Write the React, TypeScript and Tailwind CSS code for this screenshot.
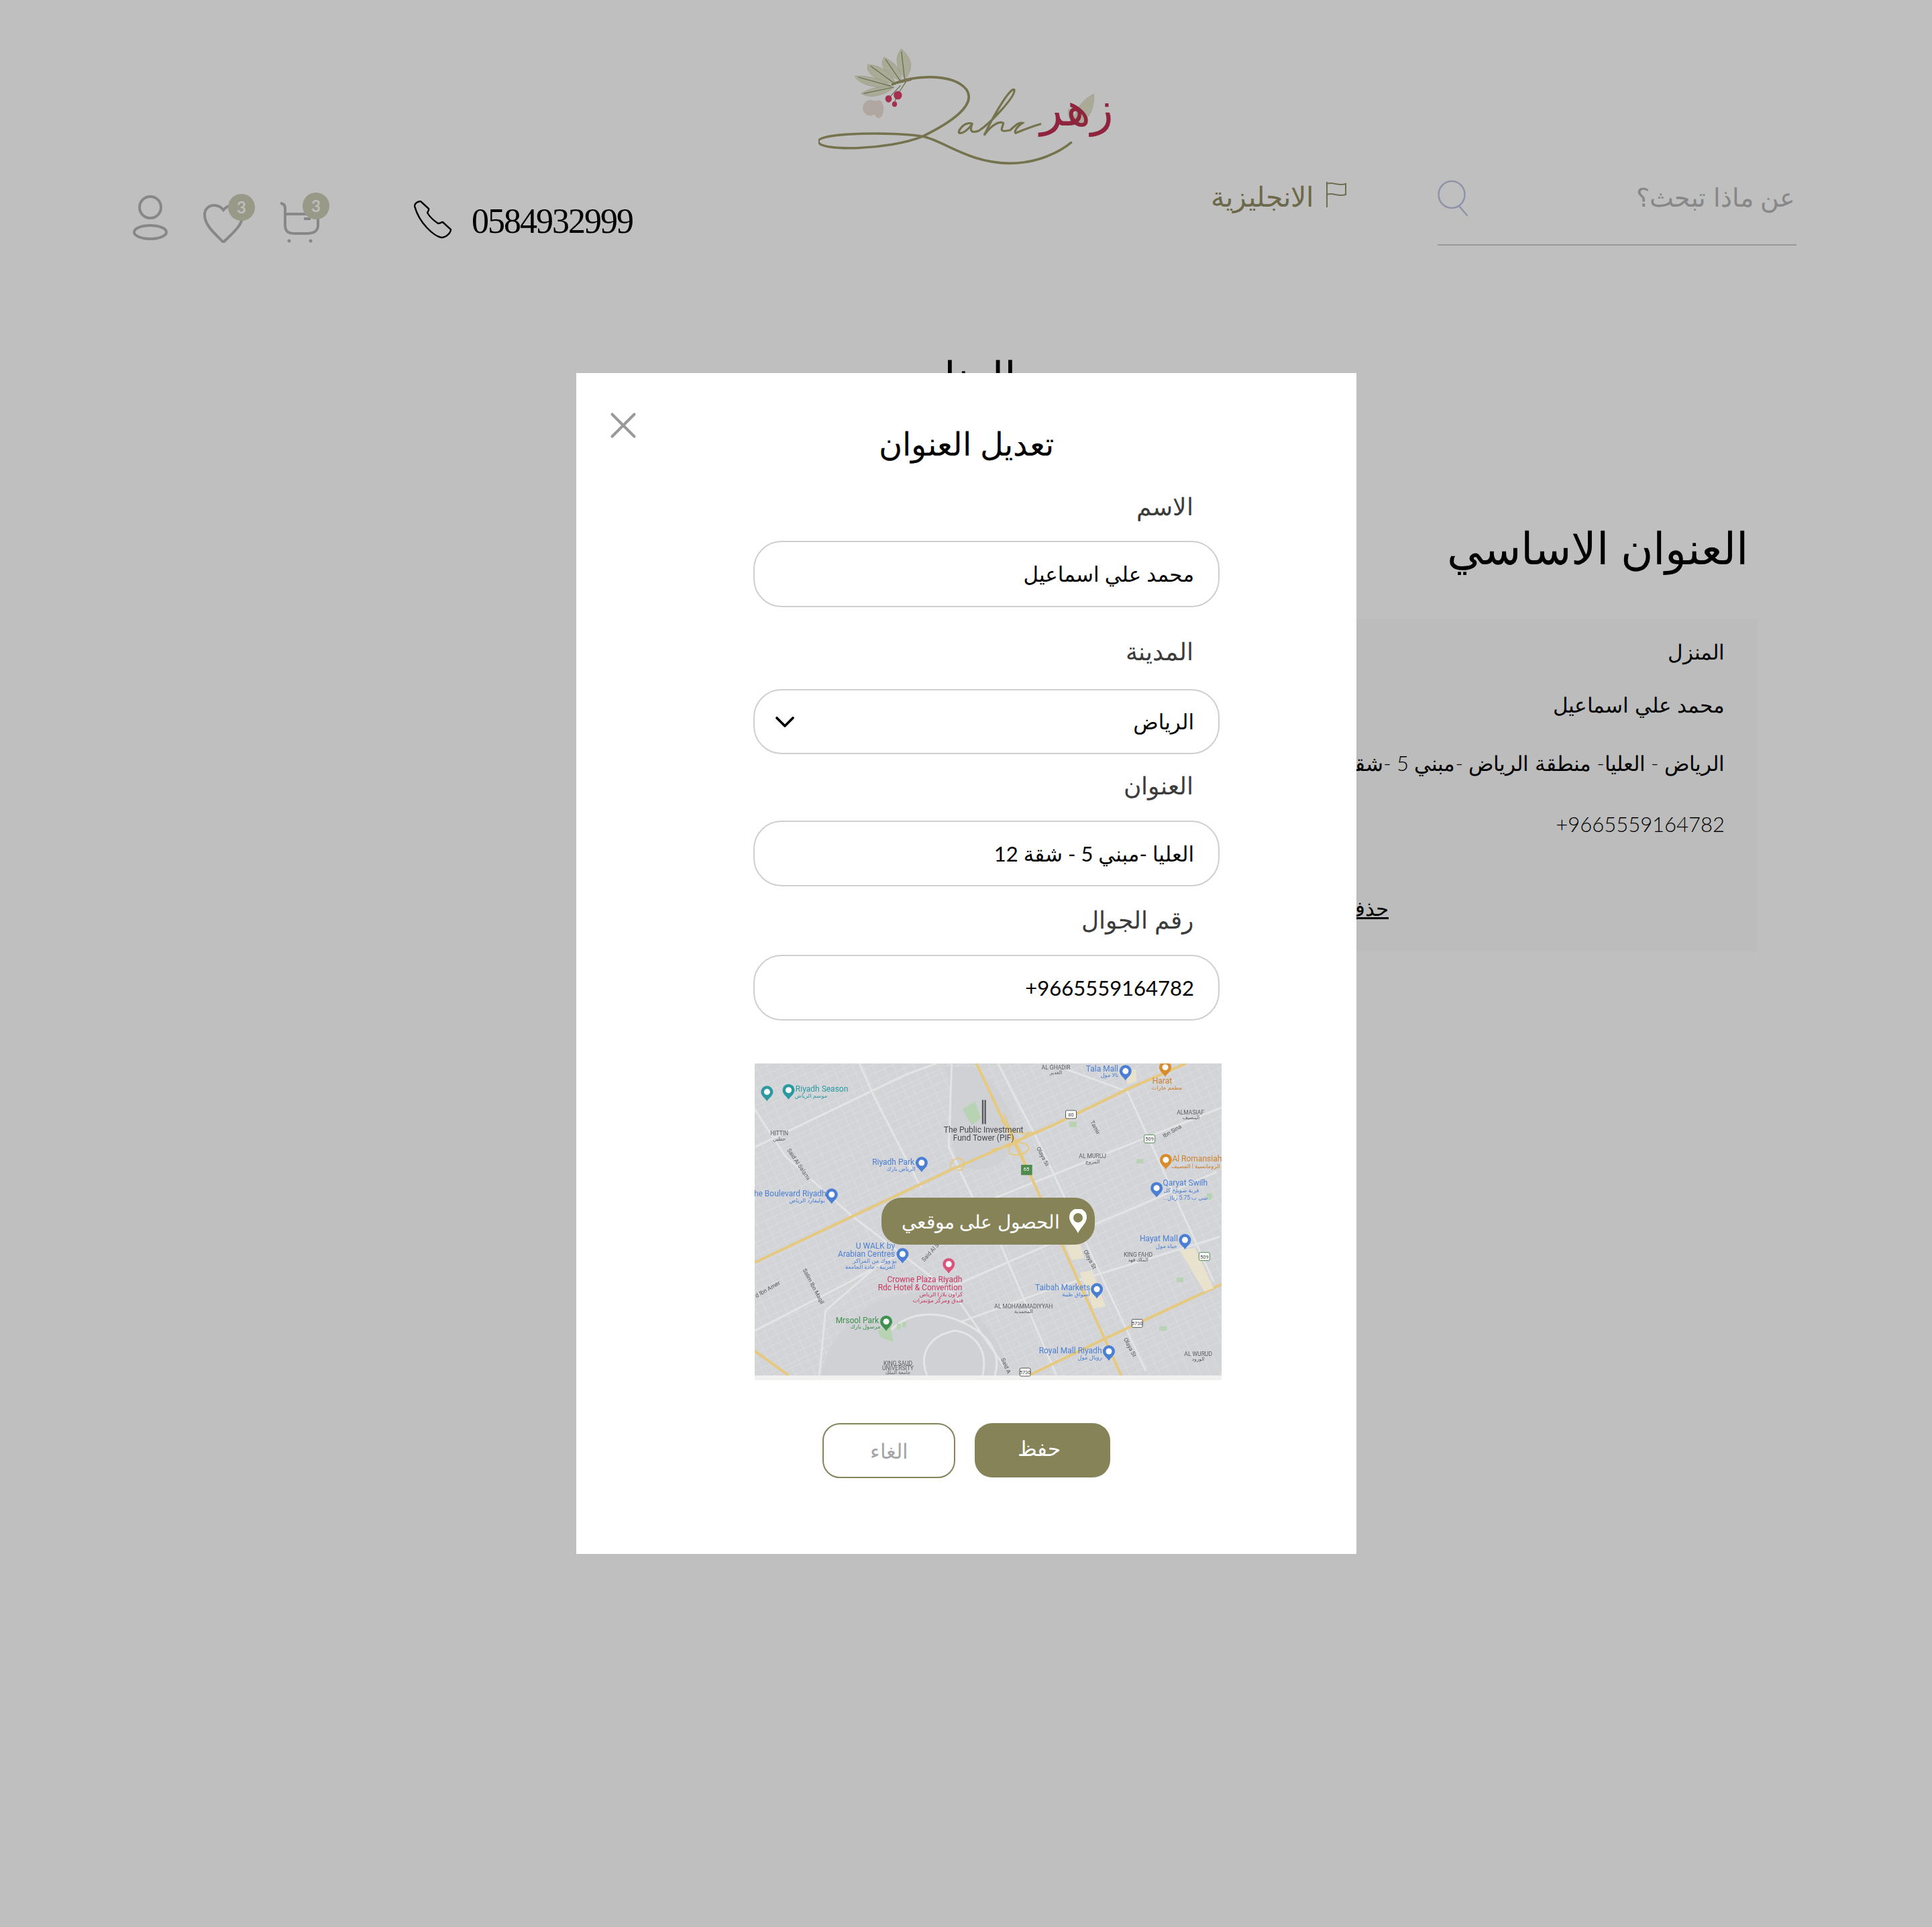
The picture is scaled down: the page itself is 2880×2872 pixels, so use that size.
import { ChevronDown, X } from "lucide-react"

// map artwork is traced from a crop, so its numbers are in crop units
const mx = (x: number) => (x - 30) / 2.178
const my = (y: number) => (y - 45) / 3

const latin = "Roboto, sans-serif"
const arabic = "'DejaVu Sans', sans-serif"

const mapLabels: [string, number, number, string, number][] = [
  ["Riyadh Season", 248, 157, "#2a9aa0", 12],
  ["موسم الرياض", 213, 190, "#2a9aa0", 8.5],
  ["Tala Mall", 1158, 68, "#4a7fd4", 12],
  ["تالا مول", 1182, 96, "#4a7fd4", 8.5],
  ["Harat", 1353, 122, "#c9812e", 12],
  ["مطعم حارات", 1368, 152, "#c9812e", 8.5],
  ["AL GHADIR", 1008, 62, "#5a5d62", 8.5],
  ["الغدير", 1008, 84, "#5a5d62", 7.5],
  ["ALMASIAF", 1445, 263, "#5a5d62", 8.5],
  ["المصيف", 1447, 285, "#5a5d62", 7.5],
  ["HITTIN", 110, 358, "#5a5d62", 8.5],
  ["حطين", 110, 382, "#5a5d62", 7.5],
  ["The Public Investment", 773, 340, "#45484c", 12],
  ["Fund Tower (PIF)", 773, 378, "#45484c", 12],
  ["Riyadh Park", 480, 485, "#4a7fd4", 12],
  ["الرياض بارك", 505, 517, "#4a7fd4", 8.5],
  ["AL MURUJ", 1127, 460, "#5a5d62", 8.5],
  ["المروج", 1127, 483, "#5a5d62", 7.5],
  ["Al Romansiah", 1466, 471, "#c9812e", 12],
  ["الرومانسية | المصيف", 1462, 503, "#c9812e", 8.5],
  ["Qaryat Swilh", 1428, 578, "#4a7fd4", 12],
  ["قرية صويلح كل", 1415, 612, "#4a7fd4", 8.5],
  ["شي ب 5.75 ريال...", 1428, 645, "#4a7fd4", 8.5],
  ["he Boulevard Riyadh", 145, 626, "#4a7fd4", 12],
  ["بوليفارد الرياض", 200, 658, "#4a7fd4", 8.5],
  ["U WALK by", 422, 860, "#4a7fd4", 12],
  ["Arabian Centres", 393, 897, "#4a7fd4", 12],
  ["يو ووك من المراكز", 420, 928, "#4a7fd4", 8.5],
  ["العربية - جادة الجامعة", 405, 955, "#4a7fd4", 8.5],
  ["Hayat Mall", 1342, 828, "#4a7fd4", 12],
  ["حياة مول", 1367, 860, "#4a7fd4", 8.5],
  ["KING FAHD", 1275, 900, "#5a5d62", 8.5],
  ["الملك فهد", 1275, 922, "#5a5d62", 7.5],
  ["Crowne Plaza Riyadh", 582, 1010, "#c8365f", 12],
  ["Rdc Hotel & Convention", 567, 1047, "#c8365f", 12],
  ["كراون بلازا الرياض", 635, 1078, "#c8365f", 8.5],
  ["فندق ومركز مؤتمرات", 625, 1105, "#c8365f", 8.5],
  ["Taibah Markets", 1030, 1046, "#4a7fd4", 12],
  ["أسواق طيبة", 1073, 1078, "#4a7fd4", 8.5],
  ["AL MOHAMMADIYYAH", 903, 1131, "#5a5d62", 8.5],
  ["المحمدية", 903, 1153, "#5a5d62", 7.5],
  ["Mrsool Park", 363, 1192, "#3f9150", 12],
  ["مرسول بارك", 390, 1222, "#3f9150", 8.5],
  ["Royal Mall Riyadh", 1055, 1327, "#4a7fd4", 12],
  ["رويال مول", 1118, 1359, "#4a7fd4", 8.5],
  ["KING SAUD", 495, 1385, "#5a5d62", 8.5],
  ["UNIVERSITY", 495, 1407, "#5a5d62", 8.5],
  ["جامعة الملك", 495, 1426, "#5a5d62", 7.5],
  ["AL WURUD", 1470, 1344, "#5a5d62", 8.5],
  ["الورود", 1470, 1366, "#5a5d62", 7.5],
]

const streetNames: [string, number, number, number][] = [
  ["Olaya St", 960, 465, 62],
  ["Olaya St", 1113, 925, 62],
  ["Olaya St", 1243, 1318, 62],
  ["Tamir", 1130, 335, 62],
  ["Said Al Salami", 168, 500, 56],
  ["Salim Ibn Maqil", 215, 1045, 62],
  ["Ibn Sina", 1388, 355, -30],
  ["Said Al S", 605, 895, -48],
  ["d Ibn Amer", 75, 1062, -30],
  ["Said A", 840, 1400, 66],
]

const pins: [string, number, number][] = [
  ["#2a9aa0", 140, 170],
  ["#2a9aa0", 70, 178],
  ["#4a7fd4", 1234, 85],
  ["#d98c2b", 1363, 68],
  ["#4a7fd4", 572, 495],
  ["#d98c2b", 1365, 482],
  ["#4a7fd4", 1335, 608],
  ["#4a7fd4", 280, 637],
  ["#4a7fd4", 510, 903],
  ["#4a7fd4", 1427, 840],
  ["#d9557c", 660, 948],
  ["#4a7fd4", 1141, 1060],
  ["#3f9150", 457, 1205],
  ["#4a7fd4", 1180, 1338],
]

const shields: [string, number, number, string][] = [
  ["80", 1057, 273, "#555"],
  ["509", 1312, 382, "#4f8a4f"],
  ["509", 1490, 908, "#4f8a4f"],
  ["5730", 1272, 1207, "#555"],
  ["5730", 908, 1425, "#555"],
]

const streetsA = Array.from({ length: 62 }, (_, i) => 60 + i * 36 + ((i * 37) % 17))
const streetsB = Array.from({ length: 60 }, (_, i) => -460 + i * 34 + ((i * 29) % 15))

function MapArt() {
  return (
    <svg width="696" height="472" className="block blur-[0.4px]">
      <rect width="696" height="465" fill="#d3d4d7" />
      <g transform="translate(-13.77 -15) scale(0.4591 0.3333)" fill="none">
        {streetsA.map((c, i) => (
          <line key={i} x1="0" y1={c} x2="1600" y2={c - 1018} stroke="#dcdde0" strokeWidth="1" vectorEffect="non-scaling-stroke" />
        ))}
        {streetsB.map((c, i) => (
          <line key={i} x1={c} y1="0" x2={c + 495} y2="1500" stroke="#dcdde0" strokeWidth="1" vectorEffect="non-scaling-stroke" />
        ))}
        <path d="M240 1465 C290 1130 480 1030 680 1080 C790 1190 840 1340 870 1465Z" fill="#d0d1d4" />
        <path d="M640 60 C700 150 640 400 700 500 C760 560 900 480 880 330 C850 200 800 120 740 60Z" fill="#d0d1d4" />
        {[
          "M30 420 L520 95 L620 45",
          "M370 45 L420 200 L570 600",
          "M30 250 L130 460 L340 720 L680 1080 L840 1400",
          "M820 45 L960 420 L1300 1420",
          "M1040 70 L1240 170 L1520 1020",
          "M530 800 L1550 240",
          "M640 1060 L1530 530",
          "M700 1200 L1000 1050 L1540 820",
          "M30 1240 L340 1020 L520 880",
          "M670 45 L660 420 L740 650 L830 860 L1010 1440",
          "M240 1440 L260 1150 L420 960",
        ].map((d) => (
          <path key={d} d={d} stroke="#e3e4e6" strokeWidth="3" vectorEffect="non-scaling-stroke" />
        ))}
        <path d="M470 1240 C540 1140 640 1160 700 1200 C800 1260 830 1350 810 1440 M590 1440 C560 1340 600 1260 680 1240 C740 1250 790 1320 770 1440" stroke="#e4e5e7" strokeWidth="3" vectorEffect="non-scaling-stroke" />
        <g stroke="#e6c97e">
          <path d="M30 935 L660 525 L1000 320 L1240 160 L1430 45" strokeWidth="4" vectorEffect="non-scaling-stroke" />
          <path d="M750 45 L830 280 L920 530 L1220 1440" strokeWidth="4" vectorEffect="non-scaling-stroke" />
          <path d="M920 1440 L1160 1280 L1550 1030" strokeWidth="4" vectorEffect="non-scaling-stroke" />
          <path d="M30 1330 L140 1440" strokeWidth="4" vectorEffect="non-scaling-stroke" />
          <path d="M665 520 C660 470 700 450 710 490 C712 510 700 530 690 520 M830 300 C860 350 900 380 960 340 M860 450 C840 400 900 380 920 420 C920 450 880 460 860 450 M800 430 C860 420 890 400 920 350 M840 270 C850 330 900 440 910 500" strokeWidth="2" vectorEffect="non-scaling-stroke" />
        </g>
        <g fill="#b7d3b2">
          <path d="M705 250 L745 215 L765 290 L735 320Z" />
          <path d="M430 1240 L470 1210 L480 1290 L440 1270Z" />
          <rect x="492" y="1208" width="12" height="26" />
          <rect x="510" y="1200" width="12" height="24" />
          <rect x="1052" y="305" width="24" height="24" />
          <rect x="1270" y="472" width="22" height="20" />
          <rect x="1400" y="1002" width="22" height="20" />
          <rect x="1344" y="1220" width="24" height="20" />
          <rect x="1498" y="625" width="16" height="28" />
        </g>
        <g fill="#e9e3cd">
          <path d="M1040 860 L1085 850 L1100 915 L1060 925Z" />
          <path d="M1085 980 L1125 970 L1170 1130 L1130 1142Z" />
          <path d="M1410 880 L1460 870 L1520 1050 L1490 1065Z" />
          <path d="M1235 80 L1268 70 L1270 125 L1240 138Z" />
        </g>
        <rect x="768" y="208" width="5" height="108" fill="#55585c" />
        <rect x="776" y="208" width="5" height="108" fill="#55585c" />
        <rect x="895" y="498" width="36" height="46" fill="#4f8a4f" />
      </g>
      <rect y="465" width="696" height="7" fill="#f1f1f1" />
      <text x={mx(912)} y={my(525)} textAnchor="middle" fontSize="7.5" fontFamily={latin} fill="#fff">65</text>
      {shields.map(([t, x, y, c]) => (
        <g key={t + x}>
          <rect x={mx(x) - 8} y={my(y) - 6} width="16" height="12" rx="2" fill="#fff" stroke={c} />
          <text x={mx(x)} y={my(y) + 3} textAnchor="middle" fontSize="7.5" fontFamily={latin} fill="#444">{t}</text>
        </g>
      ))}
      {pins.map(([c, x, y]) => (
        <g key={x} transform={`translate(${mx(x)} ${my(y)})`}>
          <path d="M0 12 C-3 7 -9 4 -9 -2 A9 9 0 1 1 9 -2 C9 4 3 7 0 12Z" fill={c} />
          <circle cy="-2" r="4.5" fill="#fff" />
        </g>
      ))}
      {mapLabels.map(([t, x, y, c, s]) => (
        <text key={t + x} x={mx(x)} y={my(y)} dy="0.35em" textAnchor="middle" fontSize={s} fontFamily={`${latin.split(",")[0]}, ${arabic}`} fill={c}>
          {t}
        </text>
      ))}
      {streetNames.map(([t, x, y, r]) => (
        <text key={t + x} transform={`translate(${mx(x)} ${my(y)}) rotate(${r})`} textAnchor="middle" fontSize="8.5" fontFamily={latin} fill="#55585c">
          {t}
        </text>
      ))}
    </svg>
  )
}

function Logo() {
  return (
    <div className="relative h-[180px] w-[441px]">
      <svg width="441" height="180" viewBox="300 90 1080 540" preserveAspectRatio="none" className="block" fill="none">
        <g fill="#e3e5c8" stroke="#a8aa88" strokeWidth="0.8">
          <path d="M1240 440 C1225 380 1260 330 1305 300 C1310 370 1285 420 1240 440" />
          <path d="M1235 440 C1215 420 1210 390 1213 365 C1235 385 1245 415 1235 440" />
          <path d="M617 235 C578 180 580 130 603 98 C648 150 645 190 617 235" />
          <path d="M600 242 C540 210 522 170 540 136 C590 165 608 210 600 242" />
          <path d="M582 257 C510 245 470 205 480 168 C535 172 575 215 582 257" />
          <path d="M567 267 C500 278 445 255 433 220 C480 215 545 238 567 267" />
          <path d="M577 270 C530 318 480 318 455 298 C490 272 540 260 577 270" />
        </g>
        <g stroke="#8b8c66" strokeWidth="1.2">
          <path d="M615 235 L603 110 M598 240 L545 145 M580 255 L490 175 M565 265 L445 225 M575 270 L465 298" vectorEffect="non-scaling-stroke" />
          <path d="M620 245 L590 300 M600 262 L556 320 M590 290 L578 340 M570 258 L640 238" vectorEffect="non-scaling-stroke" />
        </g>
        <g fill="#e8dad0" opacity="0.85">
          <ellipse cx="490" cy="362" rx="28" ry="35" />
          <ellipse cx="520" cy="368" rx="18" ry="40" />
          <ellipse cx="505" cy="355" rx="30" ry="24" />
        </g>
        <g fill="#dd3f68">
          <ellipse cx="590" cy="306" rx="15" ry="19" />
          <ellipse cx="556" cy="322" rx="12" ry="16" />
          <ellipse cx="578" cy="346" rx="9" ry="12" />
        </g>
        <g stroke="#9c9a68" strokeLinecap="round">
          <path d="M570 258 C640 215 790 205 840 280 C880 350 780 430 680 490 C600 470 300 470 300 512 C300 560 560 550 680 490 C760 510 850 610 1000 610 C1100 610 1180 560 1222 518" strokeWidth="3.6" vectorEffect="non-scaling-stroke" />
          <path d="M860 432 C830 425 805 470 815 475 C835 478 860 440 862 430 C855 455 850 480 885 465 C930 430 1020 310 1015 282 C1005 265 950 370 905 485 C930 440 960 420 975 430 C975 450 950 475 1000 462 C1020 440 1030 425 1045 430 C1020 450 1015 470 1020 475 C1050 460 1080 445 1110 435" strokeWidth="3.2" vectorEffect="non-scaling-stroke" />
        </g>
      </svg>
      <span className="absolute left-[331px] top-[43px] text-[70px] leading-[100px] text-[#bf3155] [font-family:'DejaVu_Sans',sans-serif]">زهر</span>
    </div>
  )
}

function Field({ label, value, labelClass, boxClass, chevron, ltr }: { label: string; value: string; labelClass: string; boxClass: string; chevron?: boolean; ltr?: boolean }) {
  return (
    <>
      <label className={`block h-[40px] pr-[39px] text-[36px] leading-[40px] font-light text-[#3c3c3c] ${labelClass}`}>{label}</label>
      <div className={`flex items-center justify-between rounded-[42px] border-2 border-[#cfcfcf] pl-[21px] pr-[36px] ${boxClass}`}>
        <input readOnly value={value} dir={ltr ? "ltr" : "rtl"} className="min-w-0 flex-1 bg-transparent text-right text-[31px] font-normal text-black outline-none" />
        {chevron && <ChevronDown size={48} strokeWidth={1.9} className="text-black" />}
      </div>
    </>
  )
}

export default function App() {
  return (
    <div dir="rtl" className="relative h-[2872px] w-[2880px] overflow-hidden bg-white [font-family:'Lato','DejaVu_Sans',sans-serif]">
      {/* page behind the dialog */}
      <div className="flex justify-center pt-[70px]">
        <Logo />
      </div>
      <div className="mt-[18px] flex items-start justify-between pl-[198px] pr-[202px]" dir="rtl">
        <div className="flex items-start">
          <div className="w-[535px] border-b-2 border-[#cccccc] pb-[40px]">
            <div className="flex h-[56px] items-center justify-between">
              <span className="-mt-[6px] pr-[2px] text-[38px] leading-[44px] font-light text-[#b5b5b5]">عن ماذا تبحث؟</span>
              <svg width="47" height="54" viewBox="0 0 47 54" fill="none" stroke="#bdc3e0" strokeWidth="2.4">
                <ellipse cx="21" cy="21" rx="19.5" ry="20" />
                <path d="M32 38 L44 52" strokeLinecap="round" />
              </svg>
            </div>
          </div>
          <div className="mr-[136px] flex items-start gap-[18px] pt-[2px]">
            <svg width="31" height="38" viewBox="0 0 31 38" fill="none" stroke="#94926a" strokeWidth="2" className="mt-[1px]">
              <path d="M2 0 V38 M2 3 C11 -1 18 7 30 3 V19 C18 23 11 15 2 19" />
            </svg>
            <span className="-mt-[2px] text-[41px] leading-[50px] font-light text-[#8f8d62]">الانجليزية</span>
          </div>
        </div>
        <div dir="ltr" className="flex items-start pt-[23px]">
          <svg width="52" height="67" viewBox="0 0 52 67" fill="none" stroke="#b5b5b5" strokeWidth="4">
            <ellipse cx="26" cy="18" rx="16" ry="16" />
            <ellipse cx="26" cy="55" rx="24" ry="10" />
          </svg>
          <div className="relative ml-[53px] mt-[13px] h-[58px] w-[61px]">
            <svg width="61" height="58" viewBox="0 0 61 58" fill="none" stroke="#b5b5b5" strokeWidth="4">
              <path d="M30 57 C18 45 2 32 2 16 C2 7 9 2 16 2 C22 2 27 5 30 9 C33 5 38 2 45 2 C52 2 59 7 59 16 C59 32 42 45 30 57Z" />
            </svg>
            <span className="absolute -right-[16px] -top-[15px] flex h-[40px] w-[40px] items-center justify-center rounded-full bg-[#cdcdb4] text-[24px] font-semibold text-white">3</span>
          </div>
          <div className="relative ml-[53px] mt-[10px] h-[61px] w-[59px]">
            <svg width="59" height="61" viewBox="0 0 59 61" fill="none" stroke="#b5b5b5" strokeWidth="4">
              <path d="M1 2 C6 2 8 5 8 10 V34 C8 44 12 47 24 47 H40 C52 47 57 43 57 34 V18 H8" />
              <path d="M36 25 H46" />
              <circle cx="14" cy="58" r="2.5" fill="#b5b5b5" stroke="none" />
              <circle cx="46" cy="58" r="2.5" fill="#b5b5b5" stroke="none" />
            </svg>
            <span className="absolute -right-[15px] -top-[14px] flex h-[40px] w-[40px] items-center justify-center rounded-full bg-[#cdcdb4] text-[24px] font-semibold text-white">3</span>
          </div>
          <svg width="57" height="57" viewBox="0 0 57 57" fill="none" stroke="#000" strokeWidth="2.4" className="ml-[141px] mt-[8px]">
            <path d="M1 8 C1 4 6 1 10 1 L22 12 C23 15 20 17 20 18 C24 25 30 30 36 34 C39 34 41 32 43 32 L55 43 C55 48 48 55 41 55 C30 53 8 34 1 8Z" />
          </svg>
          <span className="ml-[29px] mt-[7px] text-[52px] leading-[64px] tracking-[-2px] text-black [font-family:'Liberation_Serif',serif]">0584932999</span>
        </div>
      </div>

      <h2 className="mt-[155px] pr-[56px] text-center text-[64px] leading-[80px] font-light text-black">العناوين</h2>
      <div className="mt-[175px] pr-[274px]">
        <h3 className="text-[66px] leading-[80px] font-light text-black">العنوان الاساسي</h3>
      </div>
      <div className="mr-[260px] mt-[66px] h-[496px] w-[1500px] bg-[#fbfbfb] pr-[49px] pt-[28px] text-[31px] font-light text-black">
        <p className="h-[42px] leading-[42px]">المنزل</p>
        <p className="mt-[37px] h-[42px] leading-[42px]">محمد علي اسماعيل</p>
        <p className="mt-[45px] h-[42px] leading-[42px]">الرياض - العليا- منطقة الرياض -مبني 5 -شقة 12</p>
        <p dir="ltr" className="mt-[49px] h-[42px] text-right leading-[42px]">+9665559164782</p>
        <p className="mr-[501px] mt-[83px] h-[42px] leading-[42px] underline">حذف</p>
      </div>

      {/* dialog */}
      <div className="absolute inset-0 flex justify-center bg-black/25">
        <div className="relative ml-[1px] mt-[556px] h-[1760px] w-[1163px] bg-white">
          <button className="absolute left-[37px] top-[45px] text-[#999999]">
            <X size={66} strokeWidth={1.5} />
          </button>
          <h1 className="pt-[75px] text-center text-[48px] leading-[60px] font-light text-black">تعديل العنوان</h1>
          <form className="pl-[264px] pr-[204px]">
            <Field label="الاسم" value="محمد علي اسماعيل" labelClass="mt-[43px]" boxClass="mt-[32px] h-[99px]" />
            <Field label="المدينة" value="الرياض" labelClass="mt-[45px]" boxClass="mt-[37px] h-[97px]" chevron />
            <Field label="العنوان" value="العليا -مبني 5 - شقة 12" labelClass="mt-[26px]" boxClass="mt-[33px] h-[98px]" />
            <Field label="رقم الجوال" value="+9665559164782" labelClass="mt-[29px]" boxClass="mt-[33px] h-[98px]" ltr />
            <div className="relative -mr-[3px] mt-[64px] h-[472px] w-[696px] overflow-hidden">
              <MapArt />
              <button type="button" className="absolute left-[189px] top-[200px] flex h-[70px] w-[318px] items-center gap-[14px] rounded-[30px] bg-[#868358] pr-[12px] text-[28px] font-light text-white">
                <svg width="26" height="36" viewBox="0 0 26 36">
                  <path fillRule="evenodd" fill="#fff" d="M13 36 C9 27 0 21 0 12 A13 13 0 0 1 26 12 C26 21 17 27 13 36Z M13 6 A7 7 0 1 0 13 20 A7 7 0 1 0 13 6Z" />
                </svg>
                الحصول على موقعي
              </button>
            </div>
          </form>
          <div className="mt-[64px] flex justify-center gap-[29px]">
            <button className="h-[81px] w-[202px] rounded-[26px] bg-[#868358] pb-[6px] pr-[11px] text-[31px] font-light text-white">حفظ</button>
            <button className="h-[82px] w-[198px] rounded-[26px] border-2 border-[#868358] bg-white text-[31px] font-light text-[#a5a5a5]">الغاء</button>
          </div>
        </div>
      </div>
    </div>
  )
}
